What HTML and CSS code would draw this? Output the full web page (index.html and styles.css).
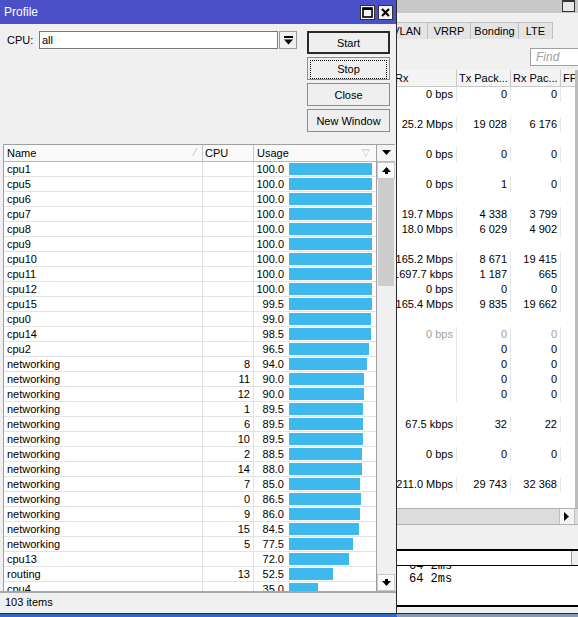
FILE: index.html
```html
<!DOCTYPE html>
<html lang="en">
<head>
  <meta charset="UTF-8">
  <title>Profile</title>
  <link rel="stylesheet" href="styles.css">
</head>
<body>
  <div class="desk">

    <!-- interface list window behind -->
    <div class="main-win">
      <div class="main-top"><span class="box-btn"></span></div>
      <div class="tabs">
        <span class="tab">VLAN</span>
        <span class="tab">VRRP</span>
        <span class="tab">Bonding</span>
        <span class="tab">LTE</span>
      </div>
      <div class="find-row"><span class="find">Find</span></div>
      <div class="if-table" id="ifTable">
        <div class="if-row if-head">
          <span>Rx</span><span>Tx Pack...</span><span>Rx Pac...</span><span>FP</span>
        </div>
      </div>
      <div class="hscroll">
        <span class="hs-track"></span>
        <span class="arrow-btn">
          <svg width="6" height="9" viewBox="0 0 6 9"><path d="M0 0 L5 4.5 L0 9 Z" fill="#000"/></svg>
        </span>
      </div>
      <div class="gap"></div>
      <div class="term">
        <div class="term-input"><span class="term-drop"></span></div>
        <div class="term-text">
          <div class="term-lines">
            <div>64 2ms</div>
            <div>64 2ms</div>
          </div>
        </div>
      </div>
    </div>

    <!-- profile window -->
    <div class="profile">
      <div class="titlebar">
        <span class="title">Profile</span>
        <span class="tb-btn">
          <svg width="11" height="11" viewBox="0 0 11 11"><rect x="1" y="1" width="9" height="9" fill="none" stroke="#000" stroke-width="1.6"/><line x1="1" y1="2" x2="10" y2="2" stroke="#000" stroke-width="2"/></svg>
        </span>
        <span class="tb-btn">
          <svg width="11" height="11" viewBox="0 0 11 11"><path d="M2 2 L9 9 M9 2 L2 9" stroke="#000" stroke-width="2.2"/></svg>
        </span>
      </div>

      <div class="controls">
        <div class="cpu-field">
          <label>CPU:</label>
          <span class="cpu-input">all</span>
          <span class="drop-btn">
            <svg width="9" height="9" viewBox="0 0 9 9"><rect x="0" y="0" width="9" height="2" fill="#000"/><path d="M0 3.5 H9 L4.5 8.5 Z" fill="#000"/></svg>
          </span>
        </div>
        <div class="btn-col">
          <button class="btn btn-default">Start</button>
          <button class="btn btn-focus"><span>Stop</span></button>
          <button class="btn">Close</button>
          <button class="btn">New Window</button>
        </div>
      </div>

      <div class="list">
        <div class="list-main">
          <div class="row head">
            <span class="c-name">Name<i class="sort">&#8260;</i></span>
            <span class="c-cpu">CPU</span>
            <span class="c-usage">Usage<i class="filter">&#9661;</i></span>
          </div>
          <div id="rows"></div>
        </div>
        <div class="vscroll">
          <span class="vs-head">
            <svg width="9" height="6" viewBox="0 0 9 6"><path d="M0 0 H9 L4.5 5 Z" fill="#000"/></svg>
          </span>
          <span class="vs-btn">
            <svg width="9" height="7" viewBox="0 0 9 7"><path d="M4.5 0 L9 5 H0 Z" fill="#000"/><rect x="3" y="5" width="3" height="2" fill="#000"/></svg>
          </span>
          <span class="vs-thumb"></span>
          <span class="vs-track"></span>
          <span class="vs-btn">
            <svg width="9" height="7" viewBox="0 0 9 7"><rect x="3" y="0" width="3" height="2" fill="#000"/><path d="M0 2 H9 L4.5 7 Z" fill="#000"/></svg>
          </span>
        </div>
      </div>

      <div class="status">103 items</div>
    </div>
  </div>

  <script>
    const tasks = [
      ['cpu1', '', '100.0'], ['cpu5', '', '100.0'], ['cpu6', '', '100.0'],
      ['cpu7', '', '100.0'], ['cpu8', '', '100.0'], ['cpu9', '', '100.0'],
      ['cpu10', '', '100.0'], ['cpu11', '', '100.0'], ['cpu12', '', '100.0'],
      ['cpu15', '', '99.5'], ['cpu0', '', '99.0'], ['cpu14', '', '98.5'],
      ['cpu2', '', '96.5'], ['networking', '8', '94.0'], ['networking', '11', '90.0'],
      ['networking', '12', '90.0'], ['networking', '1', '89.5'], ['networking', '6', '89.5'],
      ['networking', '10', '89.5'], ['networking', '2', '88.5'], ['networking', '14', '88.0'],
      ['networking', '7', '85.0'], ['networking', '0', '86.5'], ['networking', '9', '86.0'],
      ['networking', '15', '84.5'], ['networking', '5', '77.5'], ['cpu13', '', '72.0'],
      ['routing', '13', '52.5'], ['cpu4', '', '35.0']
    ];

    const rows = document.getElementById('rows');
    tasks.forEach(t => {
      const w = Math.round(83 * parseFloat(t[2]) / 100);
      rows.innerHTML += `
        <div class="row">
          <span class="c-name">${t[0]}</span>
          <span class="c-cpu">${t[1]}</span>
          <span class="c-usage"><b>${t[2]}</b><em class="bar" style="width:${w}px"></em></span>
        </div>`;
    });

    // interface traffic rows: rx, tx packets, rx packets, dim
    const traffic = [
      ['0 bps', '0', '0'], null, ['25.2 Mbps', '19 028', '6 176'], null,
      ['0 bps', '0', '0'], null, ['0 bps', '1', '0'], null,
      ['19.7 Mbps', '4 338', '3 799'], ['18.0 Mbps', '6 029', '4 902'], null,
      ['165.2 Mbps', '8 671', '19 415'], ['1697.7 kbps', '1 187', '665'],
      ['0 bps', '0', '0'], ['165.4 Mbps', '9 835', '19 662'], null,
      ['0 bps', '0', '0', 'dim'], ['', '0', '0'], ['', '0', '0'], ['', '0', '0'],
      ['', '0', '0'], null, ['67.5 kbps', '32', '22'], null,
      ['0 bps', '0', '0'], null, ['211.0 Mbps', '29 743', '32 368'], null
    ];

    const ifTable = document.getElementById('ifTable');
    traffic.forEach(r => {
      if (!r) {
        ifTable.innerHTML += '<div class="if-row if-empty"></div>';
        return;
      }
      ifTable.innerHTML += `
        <div class="if-row ${r[3] || ''}">
          <span>${r[0]}</span><span>${r[1]}</span><span>${r[2]}</span><span></span>
        </div>`;
    });
  </script>
</body>
</html>
```

FILE: styles.css
```css
body {
  margin: 0;
  font-family: "Liberation Sans", Arial, sans-serif;
  font-size: 11px;
  color: #000;
  background: #8a9ab4;
}

.desk {
  position: relative;
  width: 578px;
  height: 617px;
  overflow: hidden;
  background: linear-gradient(to right, #2f6cc0 397px, #8a9ab4 397px);
}

/* ---------- window behind ---------- */

.main-win {
  position: absolute;
  left: 0;
  top: 0;
  width: 578px;
  height: 613px;
  background: #f0f0f0;
  display: flex;
  flex-direction: column;
  border-bottom: 1px solid #2a2a2a;
}

.main-top {
  height: 13px;
  background: #c8c8c8;
  display: flex;
  justify-content: flex-end;
}

.box-btn {
  width: 11px;
  height: 9px;
  margin-right: 3px;
  border: 1px solid #333;
  border-top-width: 2px;
  background: #e8e8e8;
}

.tabs {
  display: flex;
  padding: 9px 0 0 380px;
  height: 18px;
}

.tab {
  height: 17px;
  line-height: 17px;
  border: 1px solid #c0c0c0;
  border-bottom: none;
  background: #e4e4e4;
  margin-right: -1px;
  text-align: center;
  white-space: nowrap;
  box-sizing: border-box;
}

.tab:nth-child(1) { width: 48px; text-align: right; padding-right: 6px; }
.tab:nth-child(2) { width: 44px; }
.tab:nth-child(3) { width: 49px; }
.tab:nth-child(4) { width: 35px; }

.find-row {
  display: flex;
  justify-content: flex-end;
  padding: 8px 0 4px;
}

.find {
  width: 42px;
  height: 15px;
  border: 1px solid #a0a0a0;
  border-right: none;
  background: #fff;
  color: #a0a0a0;
  font-style: italic;
  font-size: 12px;
  padding: 1px 0 0 5px;
}

.if-table {
  background: #fff;
  height: 438px;
  overflow: hidden;
  border-right: 3px solid #bcbcbc;
}

.if-row {
  display: grid;
  grid-template-columns: 457px 54px 50px 1fr;
  height: 15px;
  line-height: 15px;
  white-space: nowrap;
}

.if-row span {
  text-align: right;
  padding-right: 3px;
  border-right: 1px solid #e6e6e6;
  overflow: hidden;
}

.if-row span:last-child {
  border-right: none;
}

.if-head {
  height: 17px;
  line-height: 16px;
  background: #f4f4f4;
}

.if-head span {
  text-align: left;
  padding-left: 2px;
  border-right: 1px solid #c8c8c8;
  border-bottom: 1px solid #c8c8c8;
}

.if-head span:first-child {
  padding-left: 395px;
}

.dim span {
  color: #a0a0a0;
}

.hscroll {
  height: 15px;
  display: flex;
  background: #dcdcdc;
  border-top: 1px solid #b0b0b0;
  border-bottom: 1px solid #b0b0b0;
}

.hs-track {
  flex: 1;
}

.arrow-btn {
  width: 14px;
  background: #f4f4f4;
  border-left: 1px solid #c0c0c0;
  border-right: 1px solid #c0c0c0;
  margin-right: 3px;
  display: flex;
  align-items: center;
  justify-content: center;
}

.gap {
  height: 24px;
}

.term {
  border-top: 2px solid #000;
  border-bottom: 2px solid #000;
  background: #fff;
  height: 54px;
}

.term-input {
  height: 14px;
  border-bottom: 1px solid #000;
  display: flex;
  justify-content: flex-end;
}

.term-drop {
  width: 6px;
  border-left: 1px solid #999;
  background: #eee;
}

.term-text {
  height: 39px;
  overflow: hidden;
}

.term-lines {
  font-family: "Liberation Mono", "Courier New", monospace;
  font-size: 12px;
  line-height: 13px;
  padding-left: 409px;
  margin-top: -6px;
}

/* ---------- profile window ---------- */

.profile {
  position: absolute;
  left: 0;
  top: 0;
  width: 396px;
  height: 613px;
  background: #f0f0f0;
  border-right: 1px solid #2a2a2a;
  border-bottom: 1px solid #2a2a2a;
  display: flex;
  flex-direction: column;
}

.titlebar {
  height: 24px;
  background: #4b4fc8;
  display: flex;
  align-items: center;
  padding: 0 3px 0 4px;
  gap: 3px;
}

.title {
  flex: 1;
  color: #fff;
  font-size: 12px;
}

.tb-btn {
  width: 13px;
  height: 13px;
  background: #f4f4f4;
  border: 1px solid #333;
  display: flex;
  align-items: center;
  justify-content: center;
}

.controls {
  height: 120px;
  display: flex;
  padding: 7px 0 0 7px;
  box-sizing: border-box;
}

.cpu-field {
  display: flex;
  height: 18px;
  align-items: stretch;
}

.cpu-field label {
  width: 32px;
  line-height: 18px;
}

.cpu-input {
  width: 235px;
  background: #fff;
  border: 1px solid #7a7a7a;
  padding-left: 2px;
  line-height: 16px;
}

.drop-btn {
  width: 16px;
  margin-left: 1px;
  border: 1px solid #9a9a9a;
  background: #f0f0f0;
  display: flex;
  align-items: center;
  justify-content: center;
}

.btn-col {
  display: flex;
  flex-direction: column;
  gap: 3px;
  margin-left: 10px;
}

.btn {
  width: 83px;
  height: 23px;
  background: #efefef;
  border: 1px solid #8c8c8c;
  font-family: "Liberation Sans", Arial, sans-serif;
  font-size: 11px;
  padding: 0;
}

.btn-default {
  border: 2px solid #2a2a2a;
}

.btn-focus span {
  display: block;
  margin: 2px;
  height: 17px;
  line-height: 17px;
  border: 1px dotted #000;
}

.list {
  flex: 1;
  display: flex;
  margin: 0 1px 0 3px;
  border-top: 1px solid #a0a0a0;
  border-left: 1px solid #a0a0a0;
  overflow: hidden;
}

.list-main {
  width: 373px;
  background: #fff;
  overflow: hidden;
}

.row {
  display: grid;
  grid-template-columns: 199px 51px 123px;
  height: 15px;
  border-bottom: 1px solid #e3e3e3;
  box-sizing: border-box;
  line-height: 14px;
}

.row span {
  border-right: 1px solid #e3e3e3;
}

.row.head {
  height: 17px;
  line-height: 16px;
  background: #fafafa;
  border-bottom: 1px solid #b8b8b8;
}

.head span {
  border-right: 1px solid #c8c8c8;
}

.c-name {
  padding-left: 3px;
  position: relative;
}

.c-cpu {
  text-align: right;
  padding-right: 3px;
}

.head .c-cpu {
  text-align: left;
  padding: 0 0 0 2px;
}

.c-usage {
  display: flex;
  align-items: center;
  position: relative;
}

.c-usage b {
  width: 30px;
  text-align: right;
  font-weight: normal;
  margin-right: 5px;
}

.head .c-usage {
  padding-left: 3px;
}

.bar {
  height: 12px;
  background: #3db9ed;
}

.sort, .filter {
  position: absolute;
  right: 6px;
  top: 0;
  font-style: normal;
  color: #bbb;
  font-size: 10px;
}

.vscroll {
  width: 18px;
  display: flex;
  flex-direction: column;
  border-left: 1px solid #a0a0a0;
}

.vs-head {
  height: 16px;
  background: #f4f4f4;
  border-bottom: 1px solid #b8b8b8;
  display: flex;
  align-items: center;
  justify-content: center;
}

.vs-btn {
  height: 15px;
  background: #fafafa;
  border: 1px solid #c8c8c8;
  display: flex;
  align-items: center;
  justify-content: center;
}

.vs-thumb {
  height: 107px;
  background: #cdcdcd;
  margin: 0 1px;
}

.vs-track {
  flex: 1;
  background: #f0f0f0;
}

.status {
  height: 20px;
  line-height: 19px;
  border-top: 2px solid #a8a8a8;
  padding-left: 5px;
}
```
